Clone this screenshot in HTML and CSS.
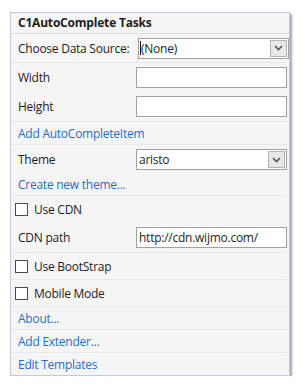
FILE: index.html
```html
<!DOCTYPE html>
<html>
<head>
<meta charset="utf-8">
<link rel="stylesheet" href="styles.css">
</head>
<body>
<div class="panel">
  <div class="header">C1AutoComplete Tasks</div>
  <div class="group">
    <div class="row field">
      <span class="label">Choose Data Source:</span>
      <div class="select"><span class="caret"></span><span class="val">(None)</span><span class="btn"><svg width="9" height="6" viewBox="0 0 9 6"><polyline points="1,1 4.5,4.5 8,1" fill="none" stroke="#555" stroke-width="1.6"/></svg></span></div>
    </div>
  </div>
  <div class="group">
    <div class="row field">
      <span class="label">Width</span>
      <div class="input"></div>
    </div>
    <div class="row field">
      <span class="label">Height</span>
      <div class="input"></div>
    </div>
  </div>
  <div class="group">
    <div class="row link">Add AutoCompleteItem</div>
  </div>
  <div class="group">
    <div class="row field">
      <span class="label">Theme</span>
      <div class="select"><span class="val">aristo</span><span class="btn"><svg width="9" height="6" viewBox="0 0 9 6"><polyline points="1,1 4.5,4.5 8,1" fill="none" stroke="#555" stroke-width="1.6"/></svg></span></div>
    </div>
    <div class="row link short">Create new theme...</div>
  </div>
  <div class="group">
    <div class="row check"><span class="box"></span><span>Use CDN</span></div>
    <div class="row field tall">
      <span class="label">CDN path</span>
      <div class="input"><span class="val">http://cdn.wijmo.com/</span></div>
    </div>
  </div>
  <div class="group">
    <div class="row check"><span class="box"></span><span>Use BootStrap</span></div>
  </div>
  <div class="group">
    <div class="row check"><span class="box"></span><span>Mobile Mode</span></div>
  </div>
  <div class="group">
    <div class="row link">About...</div>
  </div>
  <div class="group">
    <div class="row link">Add Extender...</div>
  </div>
  <div class="group">
    <div class="row link">Edit Templates</div>
  </div>
</div>
</body>
</html>
```
FILE: styles.css
```css
html, body {
  margin: 0;
  padding: 0;
  background: #ffffff;
}
body {
  font-family: "Open Sans", "Noto Sans", sans-serif;
  font-size: 12px;
  color: #1e1e1e;
}
.panel {
  margin: 12px 0 0 10px;
  width: 278px;
  border: 1px solid #c9c9d6;
  background: #f5f5f5;
  box-shadow: 2px 2px 2px rgba(0, 0, 0, 0.35);
  display: flex;
  flex-direction: column;
}
.header {
  height: 20px;
  line-height: 20px;
  padding-left: 7px;
  font-weight: bold;
  letter-spacing: -0.2px;
  border-bottom: 1px solid #dcdce4;
}
.group {
  display: flex;
  flex-direction: column;
}
.group + .group {
  border-top: 1px solid #e8e8ec;
  margin: 0 2px 0 1px;
}
.group + .group .row {
  padding-left: 6px;
}
.header + .group .row {
  padding-left: 7px;
}
.row {
  display: flex;
  align-items: center;
  letter-spacing: -0.25px;
}
.field {
  height: 29px;
  justify-content: space-between;
}
.field.tall {
  height: 30px;
}
.header + .group .field {
  height: 28px;
}
.link {
  height: 22px;
  color: #1e6fc6;
}
.link.short {
  height: 21px;
}
.check {
  height: 26px;
}
.box {
  width: 11px;
  height: 11px;
  border: 1px solid #4a4a4a;
  background: #ffffff;
  margin: 0 6px 0 -3px;
}
.input, .select {
  box-sizing: border-box;
  width: 151px;
  height: 21px;
  border: 1px solid #a0a0a0;
  background: #ffffff;
  display: flex;
  align-items: center;
  margin-right: 0;
}
.val {
  padding-left: 2px;
}
.select .btn {
  margin-left: auto;
  margin-right: 1px;
  width: 15px;
  height: 15px;
  border: 1px solid #b4b4b4;
  background: #e8e8e8;
  display: flex;
  align-items: center;
  justify-content: center;
}
.caret {
  width: 1px;
  height: 14px;
  background: #000;
  margin-left: 1px;
}
.caret + .val {
  padding-left: 0;
}
```
